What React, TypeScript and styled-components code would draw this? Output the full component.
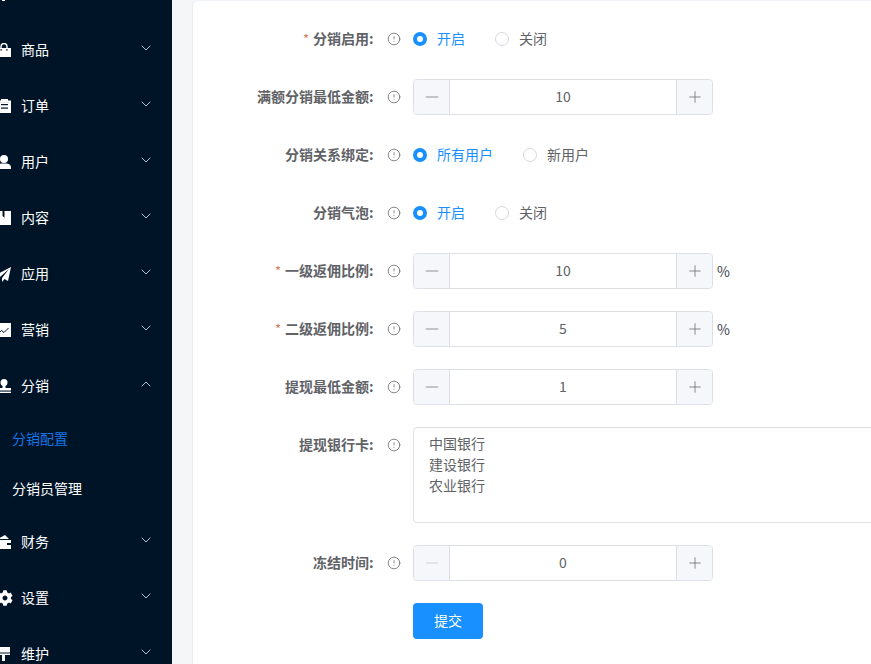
import React from 'react'
import styled, { createGlobalStyle } from 'styled-components'
import { ChevronDown, ChevronUp, CircleAlert, Minus, Plus } from 'lucide-react'
import { FaCog } from 'react-icons/fa'

const GlobalStyle = createGlobalStyle`
  html, body {
    margin: 0;
    padding: 0;
    height: 100%;
    overflow: hidden;
    background: #f5f6f7;
    font-family: "Noto Sans CJK SC", "Liberation Sans", sans-serif;
  }
`

const D = '#001428'

const BagIcon = () => (
  <svg width="14" height="14" viewBox="0 0 14 14">
    <path d="M4 5V3.5a3 3 0 0 1 6 0V5" fill="none" stroke="#fff" strokeWidth="1.4" />
    <rect x="0" y="5" width="14" height="9" fill="#fff" />
    <rect x="3.5" y="6" width="1.2" height="1.6" fill={D} />
    <rect x="9.3" y="6" width="1.2" height="1.6" fill={D} />
  </svg>
)

const ClipboardIcon = () => (
  <svg width="14" height="14" viewBox="0 0 14 14">
    <rect x="1" y="1.5" width="13" height="12.5" fill="#fff" />
    <rect x="4" y="0" width="7" height="2" fill="#fff" />
    <rect x="4" y="5" width="7" height="1.2" fill={D} />
    <rect x="4" y="8.5" width="7" height="1.2" fill={D} />
    <rect x="2.5" y="3" width="10" height="1" fill="#e8e8e8" />
  </svg>
)

const UserIcon = () => (
  <svg width="14" height="14" viewBox="0 0 14 14">
    <circle cx="7" cy="4" r="4" fill="#fff" />
    <path d="M0 14v-1.5C0 10 2 8.5 5 8.5h4c3 0 5 1.5 5 4V14z" fill="#fff" />
  </svg>
)

const BookIcon = () => (
  <svg width="14" height="14" viewBox="0 0 14 14">
    <path d="M0 0h5.5v5l2 1.8V0H14v14H0z" fill="#fff" />
  </svg>
)

const PlaneIcon = () => (
  <svg width="15" height="15" viewBox="0 0 15 15">
    <path d="M15 0L0 8l4 2 9-8-7 9v4l2.5-3 3.5 2z" fill="#fff" />
  </svg>
)

const ChartIcon = () => (
  <svg width="14" height="14" viewBox="0 0 14 14">
    <rect width="14" height="14" fill="#fff" />
    <path d="M1 10.5l3.5-3 2.5 2 4.5-4.5" fill="none" stroke={D} strokeWidth="1" />
  </svg>
)

const StampIcon = () => (
  <svg width="14" height="14" viewBox="0 0 14 14">
    <circle cx="7" cy="3.5" r="3.5" fill="#fff" />
    <path d="M5.5 6h3v3H14v2.6H0V9h5.5z" fill="#fff" />
    <rect x="0" y="12.6" width="14" height="1.4" fill="#fff" />
  </svg>
)

const WalletIcon = () => (
  <svg width="14" height="14" viewBox="0 0 14 14">
    <path d="M1 4l7-4 4 4z" fill="#fff" />
    <path d="M0 5h14v3H10v2h4v4H0z" fill="#fff" />
  </svg>
)

const RollerIcon = () => (
  <svg width="14" height="14" viewBox="0 0 14 14">
    <rect x="0" y="0" width="13" height="5.5" fill="#fff" />
    <rect x="0" y="6.5" width="13" height="1.5" fill="#fff" />
    <rect x="5" y="8" width="3" height="6" fill="#fff" />
  </svg>
)

const menu = [
  { name: '', icon: <RollerIcon /> },
  { name: '商品', icon: <BagIcon /> },
  { name: '订单', icon: <ClipboardIcon /> },
  { name: '用户', icon: <UserIcon /> },
  { name: '内容', icon: <BookIcon /> },
  { name: '应用', icon: <PlaneIcon /> },
  { name: '营销', icon: <ChartIcon /> },
  { name: '分销', icon: <StampIcon />, open: true, children: ['分销配置', '分销员管理'] },
  { name: '财务', icon: <WalletIcon /> },
  { name: '设置', icon: <GearIcon /> },
  { name: '维护', icon: <RollerIcon /> },
]

function GearIcon() {
  return <Gear />
}

const NumberField = ({ value, disabled }: { value: number; disabled?: boolean }) => (
  <NumberBox>
    <StepButton $disabled={disabled}><Minus size={20} strokeWidth={0.9} /></StepButton>
    <NumberValue>{value}</NumberValue>
    <StepButton $right><Plus size={18} strokeWidth={1.1} /></StepButton>
  </NumberBox>
)

const RadioGroup = ({ options }: { options: string[] }) => (
  <Radios>
    {options.map((item, index) => (
      <RadioLabel key={item} $checked={index === 0}>
        <RadioDot $checked={index === 0} />
        <RadioText>{item}</RadioText>
      </RadioLabel>
    ))}
  </Radios>
)

const FormRow = (props: { label: string; required?: boolean; top?: boolean; children: React.ReactNode }) => (
  <Row $top={props.top}>
    <Label>
      {props.required && <Star>*</Star>}
      {props.label}
      <Colon>:</Colon>
    </Label>
    <Hint $top={props.top}><CircleAlert size={14} strokeWidth={1.3} /></Hint>
    {props.children}
  </Row>
)

export default function App() {
  return (
    <Page>
      <GlobalStyle />
      <Sidebar>
        {menu.map((item, index) => (
          <React.Fragment key={index}>
            <MenuItem>
              <MenuIcon>{item.icon}</MenuIcon>
              <MenuName>{item.name}</MenuName>
              <MenuArrow>
                {item.open ? <ChevronUp size={16} strokeWidth={1.4} /> : <ChevronDown size={16} strokeWidth={1.4} />}
              </MenuArrow>
            </MenuItem>
            {item.children && (
              <SubMenu>
                {item.children.map((child, i) => (
                  <SubItem key={child} $active={i === 0}>{child}</SubItem>
                ))}
              </SubMenu>
            )}
          </React.Fragment>
        ))}
      </Sidebar>
      <Main>
        <Card>
          <FormRow label="分销启用" required><RadioGroup options={['开启', '关闭']} /></FormRow>
          <FormRow label="满额分销最低金额"><NumberField value={10} /></FormRow>
          <FormRow label="分销关系绑定"><RadioGroup options={['所有用户', '新用户']} /></FormRow>
          <FormRow label="分销气泡"><RadioGroup options={['开启', '关闭']} /></FormRow>
          <FormRow label="一级返佣比例" required><NumberField value={10} /><Unit>%</Unit></FormRow>
          <FormRow label="二级返佣比例" required><NumberField value={5} /><Unit>%</Unit></FormRow>
          <FormRow label="提现最低金额"><NumberField value={1} /></FormRow>
          <FormRow label="提现银行卡" top>
            <BankText readOnly rows={4} value={'中国银行\n建设银行\n农业银行'} />
          </FormRow>
          <FormRow label="冻结时间"><NumberField value={0} disabled /></FormRow>
          <SubmitRow>
            <SubmitButton>提交</SubmitButton>
          </SubmitRow>
        </Card>
      </Main>
    </Page>
  )
}

const Page = styled.div`
  display: flex;
  width: 871px;
  height: 664px;
  overflow: hidden;
  background: #f5f6f7;
`

const Sidebar = styled.aside`
  flex: 0 0 172px;
  height: 664px;
  overflow: hidden;
  background: ${D};
`

const MenuItem = styled.div`
  box-sizing: border-box;
  display: flex;
  align-items: center;
  height: 56px;
  padding-bottom: 2px;
  color: #fff;
  font-size: 14px;
  &:first-child {
    margin-top: -34px;
  }
`

const MenuIcon = styled.span`
  display: flex;
  justify-content: flex-end;
  flex: 0 0 11px;
  width: 11px;
  min-width: 0;
  margin-top: 2px;
  svg {
    flex: none;
  }
`

const Gear = styled(FaCog)`
  width: 16px;
  height: 16px;
  margin-right: -2px;
  color: #fff;
`

const MenuName = styled.span`
  margin-left: 10px;
  flex: 1;
`

const MenuArrow = styled.span`
  display: flex;
  margin: -3px 18px 0 0;
  color: #c6d2dc;
`

const SubMenu = styled.div`
  display: flex;
  flex-direction: column;
`

const SubItem = styled.div<{ $active?: boolean }>`
  height: 50px;
  line-height: 48px;
  padding-left: 12px;
  font-size: 14px;
  color: ${p => (p.$active ? '#1475e6' : '#fff')};
`

const Main = styled.main`
  flex: 1;
  padding-left: 21px;
`

const Card = styled.section`
  box-sizing: border-box;
  width: 900px;
  height: 700px;
  padding-top: 20px;
  background: #fff;
  border: 1px solid #e9edf5;
  border-top-color: #eef1f7;
  border-bottom: 0;
  border-radius: 6px 0 0 0;
  margin-left: -1px;
`

const Row = styled.div<{ $top?: boolean }>`
  display: flex;
  align-items: ${p => (p.$top ? 'flex-start' : 'center')};
  margin-bottom: 22px;
`

const SubmitRow = styled.div`
  display: flex;
  margin-left: 220px;
`

const Label = styled.label`
  flex: 0 0 182px;
  height: 36px;
  line-height: 34px;
  text-align: right;
  color: #606266;
  font-size: 14px;
  font-weight: 700;
`

const Colon = styled.span`
  display: inline-block;
  width: 6px;
  text-align: left;
`

const Star = styled.span`
  margin-right: 4px;
  color: #d27c5a;
  font-weight: 400;
  font-size: 13px;
`

const Hint = styled.span<{ $top?: boolean }>`
  display: flex;
  justify-content: center;
  flex: 0 0 38px;
  color: #606266;
  margin-top: ${p => (p.$top ? '11px' : '0')};
`

const Radios = styled.div`
  display: flex;
  gap: 30px;
`

const RadioLabel = styled.label<{ $checked?: boolean }>`
  display: flex;
  align-items: center;
  gap: 10px;
  height: 20px;
  font-size: 14px;
  color: ${p => (p.$checked ? '#1890ff' : '#606266')};
`

const RadioText = styled.span`
  margin-top: -2px;
  line-height: 20px;
`

const RadioDot = styled.span<{ $checked?: boolean }>`
  box-sizing: border-box;
  width: 14px;
  height: 14px;
  border-radius: 50%;
  border: ${p => (p.$checked ? '4px solid #1890ff' : '1px solid #d5d8df')};
  background: #fff;
`

const NumberBox = styled.div`
  box-sizing: border-box;
  display: flex;
  width: 300px;
  height: 36px;
  border: 1px solid #dcdfe6;
  border-radius: 4px;
  overflow: hidden;
`

const StepButton = styled.span<{ $right?: boolean; $disabled?: boolean }>`
  display: flex;
  align-items: center;
  justify-content: center;
  flex: 0 0 35px;
  background: #f5f7fa;
  color: ${p => (p.$disabled ? '#c8c9cc' : '#6f7074')};
  border-left: ${p => (p.$right ? '1px solid #dcdfe6' : '0')};
  border-right: ${p => (p.$right ? '0' : '1px solid #dcdfe6')};
`

const NumberValue = styled.span`
  flex: 1;
  text-align: center;
  line-height: 33px;
  font-size: 14px;
  color: #606266;
`

const Unit = styled.span`
  margin-left: 4px;
  font-size: 14px;
  color: #40444c;
`

const BankText = styled.textarea`
  box-sizing: border-box;
  flex: 0 0 600px;
  height: 96px;
  padding: 5px 15px;
  border: 1px solid #dcdfe6;
  border-radius: 4px;
  font-family: inherit;
  font-size: 14px;
  line-height: 21px;
  color: #606266;
  resize: none;
  outline: none;
`

const SubmitButton = styled.button`
  width: 70px;
  height: 36px;
  padding: 0 0 2px;
  border: 0;
  border-radius: 4px;
  background: #1890ff;
  color: #fff;
  font-family: inherit;
  font-size: 14px;
`
